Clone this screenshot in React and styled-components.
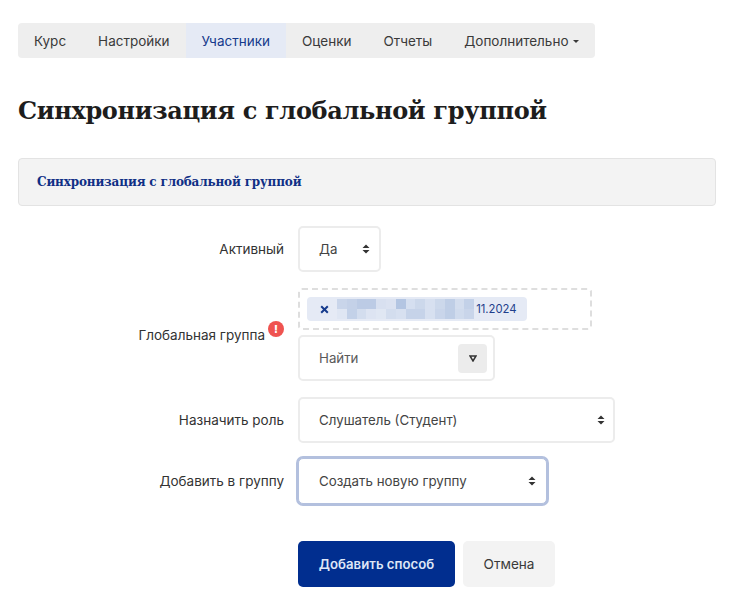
import React from "react";
import styled, {createGlobalStyle} from "styled-components";

const GlobalStyle = createGlobalStyle`
    html, body {
        margin: 0;
        padding: 0;
        background: #fff;
    }
    body {
        font-family: "Inter", "Noto Sans", sans-serif;
        color: #2b2b2b;
    }
`;

const Page = styled.div`
    width: 730px;
    height: 600px;
    padding: 23px 14px 0 18px;
    box-sizing: border-box;
    overflow: hidden;
`;

const Nav = styled.nav`
    display: inline-flex;
    height: 35px;
    background: #eeeeee;
    border-radius: 4px;
    overflow: hidden;
    vertical-align: top;
`;

const NavItem = styled.a`
    display: flex;
    align-items: center;
    gap: 4px;
    padding: 0 16px;
    font-size: 13.5px;
    color: ${(p) => (p.$active ? "#153a8c" : "#3a3a3a")};
    background: ${(p) => (p.$active ? "#e5eaf5" : "transparent")};
`;

const Caret = styled.span`
    width: 0;
    height: 0;
    margin-top: 1px;
    border-left: 3px solid transparent;
    border-right: 3px solid transparent;
    border-top: 3px solid #3a3a3a;
`;

const Title = styled.h1`
    margin: 36px 0 0;
    font-family: "DejaVu Serif", "Liberation Serif", serif;
    font-size: 24px;
    line-height: 33px;
    font-weight: 700;
    letter-spacing: -0.34px;
    color: #1d1d1d;
`;

const Panel = styled.div`
    margin-top: 31px;
    height: 48px;
    box-sizing: border-box;
    display: flex;
    align-items: center;
    padding: 0 18px;
    background: #f3f3f3;
    border: 1px solid #e3e3e3;
    border-radius: 4px;
`;

const PanelTitle = styled.a`
    font-family: "DejaVu Serif", "Liberation Serif", serif;
    font-size: 12px;
    font-weight: 700;
    letter-spacing: -0.17px;
    color: #0f2f85;
`;

const Form = styled.form`
    display: flex;
    flex-direction: column;
`;

const Row = styled.div`
    display: grid;
    grid-template-columns: 266px 1fr;
    column-gap: 14px;
    align-items: center;
    margin-top: ${(p) => p.$top}px;
`;

const Label = styled.label`
    display: flex;
    justify-content: flex-end;
    align-items: center;
    font-size: 13.5px;
    color: #333;
`;

const Control = styled.div`
    box-sizing: border-box;
    width: ${(p) => p.$width}px;
    height: 46px;
    display: flex;
    align-items: center;
    justify-content: space-between;
    padding: 0 ${(p) => p.$right ?? 8}px 0 ${(p) => (p.$focus ? 20 : 19)}px;
    font-size: 13.3px;
    color: #444;
    background: #fff;
    border: ${(p) => (p.$focus ? "1px solid #b3c0de" : "2px solid #ececec")};
    box-shadow: ${(p) => (p.$focus ? "0 0 0 2px #b3c0de" : "none")};
    border-radius: 5px;
`;

const Arrows = () => (
    <svg width="8" height="10" viewBox="0 0 8 10">
        <path d="M4 0.5 L7.5 4 H0.5 Z M4 9.5 L0.5 6 H7.5 Z" fill="#333" />
    </svg>
);

const ErrorBadge = styled.span`
    display: inline-flex;
    align-items: center;
    justify-content: center;
    width: 16px;
    height: 16px;
    margin: -12px 0 0 3px;
    border-radius: 50%;
    background: #ef5350;
    color: #fff;
    font-size: 11px;
    font-weight: 800;
`;

const Stack = styled.div`
    display: flex;
    flex-direction: column;
    gap: 5px;
`;

const DropZone = styled.div`
    box-sizing: border-box;
    width: 294px;
    height: 42px;
    padding: 7px;
    border: 2px dashed #dedede;
    border-radius: 4px;
`;

const Chip = styled.span`
    display: inline-flex;
    align-items: center;
    height: 24px;
    padding: 0 10px 0 13px;
    background: #e5eaf5;
    border-radius: 4px;
    font-size: 11.3px;
    color: #1f3f8c;
`;

const Cross = () => (
    <svg width="9" height="9" viewBox="0 0 9 9">
        <path d="M1.2 1.2 L7.8 7.8 M7.8 1.2 L1.2 7.8" stroke="#153a8c" strokeWidth="2" />
    </svg>
);

// masked part of the group name
const Masked = styled.span`
    display: grid;
    grid-template-columns: repeat(14, 9.8px);
    grid-auto-rows: 10px;
    margin: 0 2px 0 8px;
`;

const Cell = styled.i`
    background: ${(p) => p.$c};
`;

const FindButton = styled.span`
    width: 29px;
    height: 29px;
    display: flex;
    align-items: center;
    justify-content: center;
    background: #ececec;
    border-radius: 4px;
`;

const FindArrow = () => (
    <svg width="8" height="7" viewBox="0 0 8 7">
        <path d="M1 1 H7 L4 6 Z" fill="none" stroke="#333" strokeWidth="1.5" />
    </svg>
);

const Placeholder = styled.span`
    color: #5a5a5a;
`;

const Buttons = styled.div`
    display: flex;
    gap: 8px;
    margin: 37px 0 0 280px;
`;

const Button = styled.button`
    height: 46px;
    width: ${(p) => p.$width}px;
    padding: 0;
    border: 0;
    border-radius: 5px;
    font-family: inherit;
    font-size: ${(p) => (p.$primary ? 13.2 : 13.6)}px;
    font-weight: ${(p) => (p.$primary ? 600 : 400)};
    color: ${(p) => (p.$primary ? "#dfe6f6" : "#3a3a3a")};
    background: ${(p) => (p.$primary ? "#012e8f" : "#f3f3f3")};
`;

const maskColors = [
    "#c9d5ea", "#c4d1e8", "#bccbe5", "#bccbe5", "#d8e0f0", "#dbe2f1", "#b3c5e2", "#d5dff0", "#ccd8eb", "#d7e0f0", "#ccd8eb", "#bfcee6", "#d3ddee", "#c3d1e8",
    "#dfe6f3", "#c3d1e8", "#d3ddee", "#dde4f2", "#e0e7f3", "#d3ddee", "#d7e0f0", "#c6d3e9", "#c6d3e9", "#d7e0f0", "#c9d5ea", "#bfcee6", "#d0dbed", "#c9d5ea",
];

const navItems = ["Курс", "Настройки", "Участники", "Оценки", "Отчеты"];

const App = () => {
    return (
        <Page>
            <GlobalStyle />
            <Nav>
                {navItems.map((item) => (
                    <NavItem key={item} $active={item === "Участники"}>{item}</NavItem>
                ))}
                <NavItem>Дополнительно <Caret /></NavItem>
            </Nav>

            <Title>Синхронизация с глобальной группой</Title>

            <Panel>
                <PanelTitle>Синхронизация с глобальной группой</PanelTitle>
            </Panel>

            <Form>
                <Row $top={20}>
                    <Label>Активный</Label>
                    <Control $width={83} $right={9}>Да <Arrows /></Control>
                </Row>

                <Row $top={16}>
                    <Label>Глобальная группа<ErrorBadge>!</ErrorBadge></Label>
                    <Stack>
                        <DropZone>
                            <Chip>
                                <Cross />
                                <Masked>
                                    {maskColors.map((c, i) => <Cell key={i} $c={c} />)}
                                </Masked>
                                11.2024
                            </Chip>
                        </DropZone>
                        <Control $width={197} $right={6}>
                            <Placeholder>Найти</Placeholder>
                            <FindButton><FindArrow /></FindButton>
                        </Control>
                    </Stack>
                </Row>

                <Row $top={16}>
                    <Label>Назначить роль</Label>
                    <Control $width={317}>Слушатель (Студент) <Arrows /></Control>
                </Row>

                <Row $top={15}>
                    <Label>Добавить в группу</Label>
                    <Control $width={249} $right={10} $focus>Создать новую группу <Arrows /></Control>
                </Row>

                <Buttons>
                    <Button type="button" $primary $width={157}>Добавить способ</Button>
                    <Button type="button" $width={92}>Отмена</Button>
                </Buttons>
            </Form>
        </Page>
    );
};

export default App;
